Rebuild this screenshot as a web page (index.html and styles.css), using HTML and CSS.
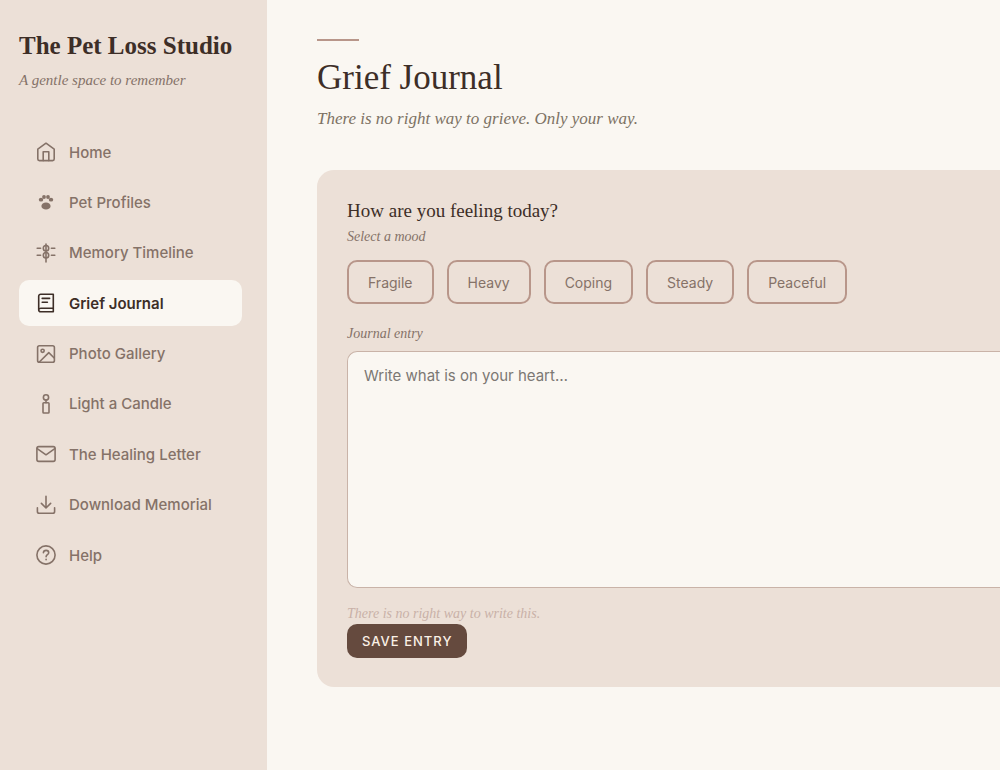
FILE: index.html
```html
<!DOCTYPE html>
<html lang="en">
<head>
    <meta charset="UTF-8">
    <meta name="viewport" content="width=device-width, initial-scale=1.0">
    <title>The Pet Loss Studio - Grief Journal</title>
    <link rel="stylesheet" href="styles.css">
</head>
<body>
    <aside class="sidebar">
        <div class="brand">The Pet Loss Studio</div>
        <p class="tagline">A gentle space to remember</p>

        <nav class="menu">
            <a href="#home">
                <svg viewBox="0 0 20 20"><path d="M1.8 7.2 10 1.2l8.2 6v9.8a1.6 1.6 0 0 1-1.6 1.6H3.4A1.6 1.6 0 0 1 1.8 17z"/><path d="M7.2 18.6v-8.8h5.6v8.8"/></svg>
                Home
            </a>
            <a href="#pets">
                <svg viewBox="0 0 20 20" class="solid"><ellipse cx="10" cy="14" rx="4.6" ry="3.6"/><ellipse cx="5" cy="7.7" rx="2.2" ry="1.9"/><ellipse cx="8" cy="5" rx="1.9" ry="2"/><ellipse cx="12" cy="5" rx="1.9" ry="2"/><ellipse cx="15" cy="7.7" rx="2.2" ry="1.9"/></svg>
                Pet Profiles
            </a>
            <a href="#timeline">
                <svg viewBox="0 0 20 20"><path d="M10 1v18M1.2 5.2h3.4M15.4 5.2h3.4M1.2 12.2h3.4M15.4 12.2h3.4"/><circle cx="10" cy="5.2" r="2.7"/><circle cx="10" cy="12.2" r="2.7"/></svg>
                Memory Timeline
            </a>
            <a href="#journal" class="active">
                <svg viewBox="0 0 20 20"><path d="M17.3 15.2V1.2H4.7a2 2 0 0 0-2 2v13.6a2 2 0 0 0 2 2h12.6v-3.6H4.7a2 2 0 0 0-2 1.8"/><path d="M6.2 5.4h7.4M6.2 9.2h5.2"/></svg>
                Grief Journal
            </a>
            <a href="#gallery">
                <svg viewBox="0 0 20 20"><rect x="1.6" y="1.8" width="16.8" height="16.4" rx="1.8"/><circle cx="6.6" cy="6.8" r="1.6"/><path d="m3.6 17.8 9.2-9.2 5.4 5.4"/></svg>
                Photo Gallery
            </a>
            <a href="#candle">
                <svg viewBox="0 0 20 20"><circle cx="10" cy="3.4" r="2.6"/><rect x="7" y="8.8" width="6" height="10.2" rx=".8"/><path d="M10 6v2.8"/></svg>
                Light a Candle
            </a>
            <a href="#letter">
                <svg viewBox="0 0 20 20"><rect x=".9" y="2.6" width="18.2" height="14.8" rx="1.8"/><path d="m1.2 4.6 8.8 6.2 8.8-6.2"/></svg>
                The Healing Letter
            </a>
            <a href="#download">
                <svg viewBox="0 0 20 20"><path d="M10 1.2v11.6M5.4 8.4l4.6 4.6 4.6-4.6M1.4 12.8v3.6a1.8 1.8 0 0 0 1.8 1.8h13.6a1.8 1.8 0 0 0 1.8-1.8v-3.6"/></svg>
                Download Memorial
            </a>
            <a href="#help">
                <svg viewBox="0 0 20 20"><circle cx="10" cy="10" r="9.1"/><path d="M7.4 7.8c.1-1.5 1.2-2.4 2.7-2.4s2.6.9 2.6 2.3c0 2-2.6 2-2.6 4"/><path d="M10.1 14.3v.4"/></svg>
                Help
            </a>
        </nav>
    </aside>

    <main class="content">
        <div class="rule"></div>
        <h1>Grief Journal</h1>
        <p class="subtitle">There is no right way to grieve. Only your way.</p>

        <form class="card">
            <h2>How are you feeling today?</h2>
            <p class="hint">Select a mood</p>
            <div class="moods">
                <button type="button">Fragile</button>
                <button type="button">Heavy</button>
                <button type="button">Coping</button>
                <button type="button">Steady</button>
                <button type="button">Peaceful</button>
            </div>

            <label class="hint" for="entry">Journal entry</label>
            <textarea id="entry" placeholder="Write what is on your heart…"></textarea>

            <p class="note">There is no right way to write this.</p>
            <button type="submit" class="save">SAVE ENTRY</button>
        </form>
    </main>
</body>
</html>
```

FILE: styles.css
```css
*{
    margin: 0;
    padding: 0;
    box-sizing: border-box;
}
body{
    display: flex;
    min-height: 100vh;
    background-color: #faf7f2;
    color: #3d2e27;
    font-family: Inter, "Open Sans", sans-serif;
}
.sidebar{
    flex: 0 0 267px;
    padding: 30px 25px 30px 19px;
    background-color: #ece0d7;
}
.brand{
    font-family: "Liberation Serif", serif;
    font-size: 25px;
    font-weight: bold;
    line-height: 32px;
    white-space: nowrap;
}
.tagline{
    margin-top: 8px;
    color: #857268;
    font-family: "Liberation Serif", serif;
    font-size: 15px;
    font-style: italic;
    line-height: 20px;
}
.menu{
    display: flex;
    flex-direction: column;
    justify-content: space-between;
    height: 449px;
    margin-top: 39px;
}
.menu a{
    display: flex;
    align-items: center;
    gap: 13px;
    height: 46px;
    padding: 0 17px;
    border-radius: 10px;
    color: #857268;
    font-size: 15px;
    font-weight: 500;
    text-decoration: none;
    white-space: nowrap;
}
.menu a.active{
    background-color: #faf7f2;
    color: #3d2e27;
    font-weight: 600;
}
.menu svg{
    flex: none;
    width: 20px;
    height: 20px;
    fill: none;
    stroke: currentColor;
    stroke-width: 1.6;
    stroke-linecap: round;
    stroke-linejoin: round;
}
.menu svg.solid{
    fill: currentColor;
    stroke: none;
}
.content{
    flex: 1;
    min-width: 0;
    padding: 39px 0 40px 50px;
}
.rule{
    width: 42px;
    height: 2px;
    background-color: #b8968a;
}
h1{
    margin-top: 16px;
    font-family: "Liberation Serif", serif;
    font-size: 35px;
    font-weight: normal;
    line-height: 42px;
}
.subtitle{
    margin-top: 8px;
    color: #7d7264;
    font-family: "Liberation Serif", serif;
    font-size: 17px;
    font-style: italic;
    line-height: 24px;
}
.card{
    margin-top: 39px;
    padding: 29px 0 29px 30px;
    border-radius: 17px 0 0 17px;
    background-color: #ece0d7;
}
h2{
    font-family: "Liberation Serif", serif;
    font-size: 19px;
    font-weight: normal;
    line-height: 24px;
}
.hint{
    display: block;
    margin-top: 4px;
    color: #857268;
    font-family: "Liberation Serif", serif;
    font-size: 14px;
    font-style: italic;
    line-height: 20px;
}
.moods{
    display: flex;
    gap: 13px;
    margin: 13px 0 20px;
}
.moods button{
    height: 44px;
    padding: 0 19px;
    border: 2px solid #b8968a;
    border-radius: 10px;
    background: none;
    color: #857268;
    font-family: inherit;
    font-size: 14px;
}
textarea{
    display: block;
    width: 100%;
    height: 237px;
    margin-top: 7px;
    padding: 12px 16px;
    border: 1px solid #c9b3a8;
    border-right: none;
    border-radius: 10px 0 0 10px;
    background-color: #faf7f2;
    color: #3d2e27;
    font-family: inherit;
    font-size: 15px;
    line-height: 24px;
    resize: none;
}
textarea::placeholder{
    color: #7c7874;
}
.note{
    margin-top: 16px;
    color: #c9b1a7;
    font-family: "Liberation Serif", serif;
    font-size: 14px;
    font-style: italic;
    line-height: 20px;
}
.save{
    height: 34px;
    padding: 0 15px;
    border: none;
    border-radius: 10px;
    background-color: #654a3e;
    color: #faf0e6;
    font-family: inherit;
    font-size: 13px;
    font-weight: 500;
    letter-spacing: 1px;
}
```
